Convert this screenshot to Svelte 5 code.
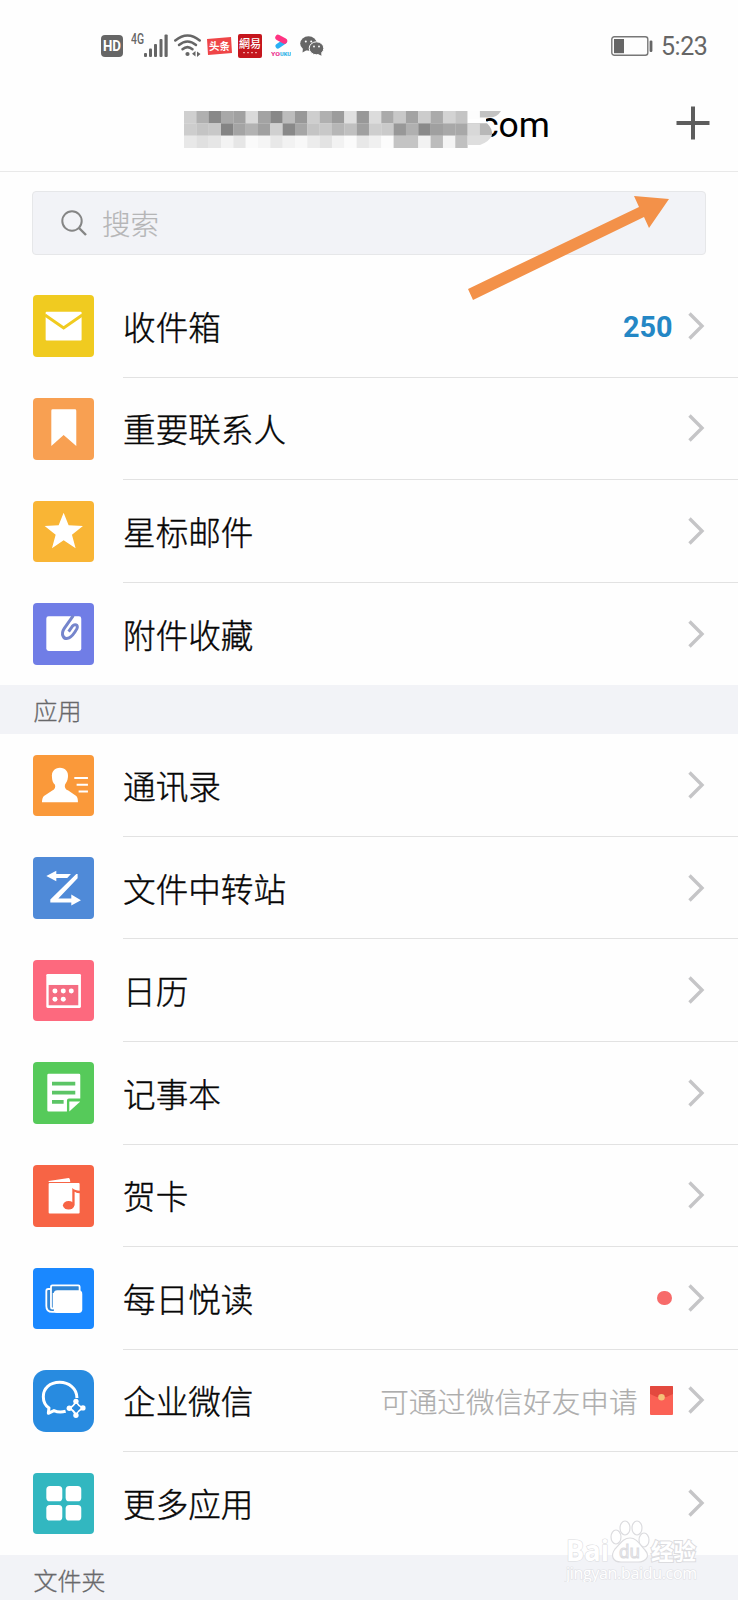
<script>
  const mailboxes = [
    { icon: 'inbox', color: '#f0cb20', label: '收件箱', count: 250 },
    { icon: 'bookmark', color: '#f8a052', label: '重要联系人' },
    { icon: 'star', color: '#f9b535', label: '星标邮件' },
    { icon: 'clip', color: '#707de6', label: '附件收藏' }
  ];
  const apps = [
    { icon: 'contacts', color: '#fa993a', label: '通讯录' },
    { icon: 'transfer', color: '#4f8ad8', label: '文件中转站' },
    { icon: 'calendar', color: '#fd697e', label: '日历' },
    { icon: 'notes', color: '#56ca5a', label: '记事本' },
    { icon: 'card', color: '#f76445', label: '贺卡' },
    { icon: 'reading', color: '#1a88ff', label: '每日悦读', dot: true },
    { icon: 'wecom', color: '#288be0', label: '企业微信', hint: '可通过微信好友申请' },
    { icon: 'more', color: '#32b7c0', label: '更多应用' }
  ];
  const sections = [
    { title: '', rows: mailboxes },
    { title: '应用', rows: apps }
  ];

  // Grey levels of the blocks that hide the address
  const mosaic = [
    [207, 176, 137, 168, 161, 218, 163, 136, 188, 152, 206, 176, 156, 224, 152, 220, 170, 200, 163, 204, 170, 211, 196, 253],
    [205, 196, 200, 132, 164, 178, 160, 208, 137, 166, 196, 200, 182, 192, 160, 206, 202, 152, 176, 138, 160, 168, 168, 216],
    [232, 224, 230, 243, 230, 250, 245, 232, 242, 248, 236, 227, 242, 251, 232, 240, 252, 196, 196, 242, 188, 244, 192, 228]
  ];
</script>

<div class="screen">
  <div class="status">
    <svg class="hd" width="22" height="22" viewBox="0 0 22 22">
      <rect width="22" height="22" rx="4" fill="#666" />
      <text x="2" y="16.300" textLength="18" lengthAdjust="spacingAndGlyphs" font-size="15" font-weight="700" fill="#fff">HD</text>
    </svg>
    <svg class="signal" width="38" height="26" viewBox="0 0 38 26">
      <text x="0" y="12" font-size="14.500" font-weight="500" textLength="13" lengthAdjust="spacingAndGlyphs" fill="#666">4G</text>
      <g fill="#666">
        <rect x="13" y="21" width="3" height="4" rx="1" /><rect x="18" y="16.500" width="3" height="8.500" rx="1" />
        <rect x="23" y="12" width="3" height="13" rx="1" /><rect x="28.500" y="7" width="3" height="18" rx="1" />
        <rect x="33.500" y="2.500" width="3.200" height="22.500" rx="1" />
      </g>
    </svg>
    <svg class="wifi" width="27" height="23" viewBox="0 0 27 23" fill="none" stroke="#666" stroke-width="2.500" stroke-linecap="round">
      <path d="M1.300 6.500Q13.500-3.500 25.700 6.500" /><path d="M5 11Q13.500 4 22 11" /><path d="M8.500 15.300Q13.500 11 18.500 15.300" />
      <circle cx="13.500" cy="20" r="2.100" fill="#666" stroke="none" />
      <path d="M21.500 17v5.500l-3.500-2.700zM23 17.500v5.500l3.500-3z" fill="#666" stroke="none" />
    </svg>
    <svg class="news" width="25" height="18" viewBox="0 0 25 18">
      <path d="M0 2L24 0L25 16L1 18Z" fill="#ef4547" />
      <text x="12.500" y="13" text-anchor="middle" font-size="10.500" font-weight="700" fill="#fff">头条</text>
    </svg>
    <svg class="netease" width="24" height="24" viewBox="0 0 24 24">
      <rect width="24" height="24" rx="2" fill="#c5161d" />
      <text x="12" y="14" text-anchor="middle" font-size="11" font-weight="500" fill="#fff">網易</text>
      <path d="M5 18.700H19" stroke="#f0a0a0" stroke-width="1.300" stroke-dasharray="2 2" />
    </svg>
    <svg class="youku" width="20" height="23" viewBox="0 0 20 23" fill="none" stroke-linecap="round">
      <path d="M7 12L13.500 7.500" stroke="#29b0f4" stroke-width="5" />
      <path d="M7 3.500L13.500 7" stroke="#ff3382" stroke-width="5.500" />
      <text x="0" y="22" font-size="6" font-weight="900" textLength="9" lengthAdjust="spacingAndGlyphs" fill="#ec3a90">YO</text>
      <text x="9" y="22" font-size="6" font-weight="900" textLength="11" lengthAdjust="spacingAndGlyphs" fill="#39b6e8">UKU</text>
    </svg>
    <svg class="wechat" width="24" height="20" viewBox="0 0 24 20">
      <ellipse cx="8.500" cy="7.500" rx="8.300" ry="7.200" fill="#666" /><path d="M3 12L2.500 16.500L7 14Z" fill="#666" />
      <ellipse cx="16.500" cy="12.300" rx="7.300" ry="6.500" fill="#666" stroke="#fff" stroke-width="1" /><path d="M18 18L21.500 19.800L21 16Z" fill="#666" />
      <g fill="#fff"><circle cx="5.800" cy="5.500" r="1" /><circle cx="11.200" cy="5.500" r="1" /><circle cx="14" cy="10.500" r=".9" /><circle cx="19" cy="10.500" r=".9" /></g>
    </svg>
    <svg class="battery" width="42" height="20" viewBox="0 0 42 20">
      <rect x=".8" y=".8" width="36" height="18.400" rx="2.500" fill="none" stroke="#777" stroke-width="1.400" />
      <rect x="3" y="3" width="10" height="14.200" fill="#666" /><rect x="38.600" y="4.500" width="2.800" height="11.500" rx="1.200" fill="#666" />
    </svg>
    <span class="time">5:23</span>
  </div>

  <header>
    <div class="title">
      <svg class="mosaic" width="318" height="37" viewBox="0 0 318 37">
        {#each mosaic as line, r}
          {#each line as g, c}
            <rect x={c * 12.33} y={r * 12.33} width="12.500" height="12.500" fill="rgb({g},{g},{g})" />
          {/each}
        {/each}
        <path d="M284 8H302V12H298V37H284Z" fill="#fdfdfd" />
        <path d="M295.900 0H317Q313 6.500 306 6.500H295.900Z" fill="#c2c2c2" />
        <path d="M284 8H298Q306 10 307 20Q309 31 300 37H284Z" fill="#fff" />
        <path d="M284 12.300H303Q309 18 308 24.600H284Z" fill="#b8b8b8" />
        <path d="M284 12.300H295.900V24.600H284Z" fill="#d8d8d8" />
        <path d="M284 24.600H308Q305 31 296 34H284Z" fill="#dedede" />
      </svg>
      <span class="domain">com</span>
    </div>
    <svg class="plus" width="34" height="34" viewBox="0 0 34 34"><path d="M17 .5V33.500M.5 17H33.500" stroke="#5d5d5d" stroke-width="4" /></svg>
  </header>

  <div class="search">
    <svg width="26" height="26" viewBox="0 0 26 26" fill="none" stroke="#858585" stroke-width="2">
      <circle cx="11" cy="11" r="9.700" /><path d="M18 18L25 25" stroke-width="2.400" />
    </svg>
    <span>搜索</span>
  </div>

  {#each sections as section}
    {#if section.title}<div class="section">{section.title}</div>{/if}
    <ul>
      {#each section.rows as row}
        <li>
          <svg class="tile" class:round={row.icon === 'wecom'} style:background={row.color} viewBox="0 0 185 185" fill="#fff">
            {#if row.icon === 'inbox'}
              <rect x="38" y="50" width="108" height="87" rx="3" />
              <path d="M36 60L92 99L148 60" fill="none" stroke={row.color} stroke-width="9" />
            {:else if row.icon === 'bookmark'}
              <path d="M55 38Q55 34 59 34H126Q130 34 130 38V144L92 111L55 144Z" />
            {:else if row.icon === 'star'}
              <path d="M92 35L107 73L150 75L117 101L128 142L92 118L57 142L68 101L35 75L77 73Z" />
            {:else if row.icon === 'clip'}
              <rect x="40" y="40" width="105" height="104" rx="7" />
              <path d="M121 38L94 76C82 94 92 112 108 105C120 99 126 88 132 77C137 65 125 62 118 70L107 86" fill="none" stroke="#7585cc" stroke-width="9" />
            {:else if row.icon === 'contacts'}
              <path d="M81 38C97 38 107 50 105 66C104 78 99 84 96 89C94 98 98 103 106 107L130 123Q135 127 135 142H27Q27 128 33 123L58 107C66 102 68 97 66 89C60 84 57 76 57 66C55 50 65 38 81 38Z" />
              <path d="M124 69H165M131 89H165M137 110H165" stroke="#fff" stroke-width="6" />
            {:else if row.icon === 'transfer'}
              <path d="M40 57L70 41V51H114L103 63H70V73ZM130 51H134V64L76 125H115V113L144 130L115 146V137H52V128Z" />
            {:else if row.icon === 'calendar'}
              <rect x="40" y="42" width="104" height="102" rx="4" />
              <rect x="47" y="75" width="89" height="61" fill="#f56d82" />
              <circle cx="66" cy="93" r="7.500" /><circle cx="91" cy="93" r="7.500" /><circle cx="115" cy="93" r="7.500" />
              <circle cx="66" cy="118" r="7.500" /><circle cx="91" cy="118" r="7.500" />
            {:else if row.icon === 'notes'}
              <path d="M47 35H138Q142 35 142 39V110H108Q102 110 102 116V149H47Q43 149 43 145V39Q43 35 47 35Z" />
              <path d="M57 65H127M57 92H127M57 120H92" stroke="#5cc566" stroke-width="11" />
              <path d="M109 119H142L109 149Z" />
            {:else if row.icon === 'card'}
              <path d="M47 48L107 39Q111 39 112 51H47ZM50 54H137Q140 54 140 57V143Q140 146 137 146H50Q47 146 47 143V57Q47 54 50 54Z" />
              <ellipse cx="107" cy="121" rx="17" ry="13" fill={row.color} />
              <path d="M118 69Q126 77 142 77V85Q131 85 125 80V121H118Z" fill={row.color} />
            {:else if row.icon === 'reading'}
              <path d="M39 63H54V52H141V80H62V130H50L39 118Z" fill="#2f84d4" />
              <g fill="none" stroke="#fff" stroke-width="5.500">
                <path d="M140 70V56Q140 52 136 52H58Q54 52 54 56V117Q54 122 58 122Q62 122 62 117V75" />
                <path d="M54 63H46Q40 63 40 69V114Q40 132 58 132H80" />
              </g>
              <rect x="62" y="67" width="86" height="68" rx="11" />
            {:else if row.icon === 'wecom'}
              <path d="M132 84C132 55 108 37 80 37C50 37 31 56 31 80C31 97 38 107 48 114L46 130L63 122C74 127 87 127 98 124" fill="none" stroke="#fff" stroke-width="9" stroke-linejoin="round" />
              <circle cx="129" cy="94" r="8" /><circle cx="150" cy="114" r="8" /><circle cx="129" cy="136" r="8" /><circle cx="109" cy="115" r="8" />
              <path d="M129 95Q136 108 150 114Q136 121 129 135Q123 121 109 115Q123 108 129 95Z" fill="none" stroke="#fff" stroke-width="5" />
            {:else}
              <rect x="40" y="39" width="48" height="46" rx="11" /><rect x="98" y="39" width="47" height="46" rx="11" />
              <rect x="40" y="96" width="48" height="47" rx="11" /><rect x="98" y="96" width="47" height="47" rx="11" />
            {/if}
          </svg>
          <div class="body">
            <span class="label">{row.label}</span>
            {#if row.count}<span class="count">{row.count}</span>{/if}
            {#if row.dot}<span class="dot"></span>{/if}
            {#if row.hint}
              <span class="hint">{row.hint}</span>
              <svg class="packet" width="23" height="29" viewBox="0 0 23 29">
                <rect width="23" height="29" rx="1" fill="#fb6155" /><path d="M0 1Q0 0 1 0H22Q23 0 23 1V8Q11.500 15 0 8Z" fill="#e3493e" />
                <circle cx="11.500" cy="11.300" r="3.300" fill="#f5c078" />
              </svg>
            {/if}
            <svg class="chevron" width="17" height="28" viewBox="0 0 17 28"><path d="M1.500 1.500L14 14L1.500 26.500" fill="none" stroke="#c5c5c7" stroke-width="3.400" /></svg>
          </div>
        </li>
      {/each}
    </ul>
  {/each}
  <div class="section">文件夹</div>

  <svg class="arrow" width="202" height="106" viewBox="0 0 202 106"><path d="M0 93L171 11L166 0L201 3L181 32L176 21L5 104Z" fill="#f39149" /></svg>

  <svg class="watermark" width="140" height="65" viewBox="0 0 140 65" fill="#fff" stroke="#dcdcdf" stroke-width="1.200">
    <text x="2" y="44" font-size="29" font-weight="700" textLength="43" lengthAdjust="spacingAndGlyphs" paint-order="stroke">Bai</text>
    <ellipse cx="52" cy="20" rx="5" ry="7" /><ellipse cx="61" cy="11" rx="5" ry="7" />
    <ellipse cx="73" cy="11" rx="5" ry="7" /><ellipse cx="80" cy="23" rx="5" ry="7" />
    <path d="M66 21C73 21 76 28 81 33C87 40 81 45 74 45H57C49 45 46 39 51 32C56 27 59 21 66 21Z" />
    <text x="55" y="41" font-size="19" textLength="21" lengthAdjust="spacingAndGlyphs">du</text>
    <text class="cn" x="87" y="43" font-size="22.500" font-weight="700" paint-order="stroke" stroke-width="2">经验</text>
    <text x="2" y="62" font-size="16" textLength="131" paint-order="stroke" stroke="#e0e1e5">jingyan.baidu.com</text>
  </svg>
</div>

<style>
  :global(body) { background: #fefefe; }
  .screen {
    position: relative;
    width: 738px;
    height: 1600px;
    overflow: hidden;
    box-sizing: border-box;
    background: #fefefe;
    color: #060606;
    font-family: Roboto, "Noto Sans CJK SC", sans-serif;
  }
  svg { display: block; flex: none; }
  .status { display: flex; align-items: center; height: 91px; padding: 0 30.500px 0 100.500px; }
  .signal { margin-left: 8px; margin-top: -1px; }
  .wifi { margin-left: 5px; }
  .news { margin-left: 6px; }
  .netease { margin-left: 6px; }
  .youku { margin-left: 9px; }
  .wechat { margin-left: 9px; }
  .battery { margin-left: auto; }
  .time { margin-left: 7.500px; margin-top: 2px; font-size: 25px; line-height: 30px; letter-spacing: -0.4px; color: #666; }
  header {
    display: flex;
    align-items: center;
    justify-content: space-between;
    height: 81px;
    box-sizing: border-box;
    padding: 0 28px 16px 184px;
    border-bottom: 1px solid #e9e9e9;
  }
  .title { display: flex; align-items: center; }
  .mosaic { position: relative; z-index: 1; margin-top: 13px; }
  .domain { margin-left: -22px; padding-top: 4px; font-size: 35.500px; line-height: 40px; color: #000; }
  .search {
    display: flex;
    align-items: center;
    gap: 15px;
    height: 64px;
    box-sizing: border-box;
    margin: 19px 32px 20px;
    padding: 0 28px;
    border: 1px solid #e6e7e9;
    border-radius: 4px;
    background: #f2f3f7;
  }
  .search span { padding-top: 6px; font-size: 28.500px; line-height: 34px; font-weight: 300; color: #b5b5b6; -webkit-text-stroke: 0.2px; }
  ul { margin: 0; padding: 0; list-style: none; }
  li { display: flex; align-items: center; height: 102.570px; padding-left: 32.500px; }
  .tile { width: 61.600px; height: 61.600px; border-radius: 4px; }
  .tile.round { border-radius: 13px; }
  .body {
    flex: 1;
    display: flex;
    align-items: center;
    height: 100%;
    box-sizing: border-box;
    margin-left: 29px;
    padding-right: 33px;
    border-bottom: 1px solid #e2e2e2;
  }
  li:last-child .body { border-bottom: 0; }
  .label { flex: 1; padding-top: 6px; font-size: 32.600px; line-height: 40px; font-weight: 300; -webkit-text-stroke: 0.4px; }
  .count { padding-top: 3px; font-size: 28.800px; font-weight: 700; color: #2487c5; }
  .dot { width: 14.500px; height: 14.500px; margin-right: 1px; border-radius: 50%; background: #f76b6a; }
  .hint { padding-top: 5px; font-size: 28.600px; line-height: 36px; font-weight: 300; color: #adadad; -webkit-text-stroke: 0.2px; }
  .packet { margin-left: 12px; }
  .chevron { margin-left: 15.500px; }
  .section {
    height: 49px;
    box-sizing: border-box;
    padding: 3px 33.500px 0;
    background: #f2f3f7;
    font-size: 24px;
    line-height: 49px;
    font-weight: 300;
    color: #68686a;
    -webkit-text-stroke: 0.3px;
  }
  .arrow { position: absolute; left: 468px; top: 196px; }
  .watermark { position: absolute; left: 564px; top: 1517px; font-family: "Open Sans", sans-serif; }
  .cn { font-family: "Noto Sans CJK SC", sans-serif; }
</style>
